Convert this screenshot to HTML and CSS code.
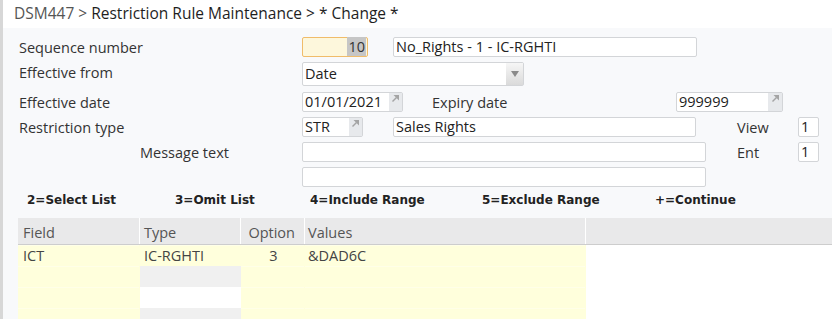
FILE: index.html
```html
<html>
	<head>
		<title>DSM447 - Restriction Rule Maintenance</title>
		<link rel="stylesheet" href="styles.css">
	</head>
	<body>
		<div class="Screen">
			<div class="Title"><span class="Pgm">DSM447 &gt;</span> Restriction Rule Maintenance &gt; * Change *</div>

			<div class="Form">
				<div class="Row">
					<div class="Lbl">Sequence number</div>
					<div class="Fld Seq"><span class="Hl">10</span></div>
					<div class="Fld Desc">No_Rights - 1 - IC-RGHTI</div>
				</div>
				<div class="Row Tall">
					<div class="Lbl Up">Effective from</div>
					<div class="Fld Drop">Date<span class="DropBtn"><svg width="8" height="6" viewBox="0 0 8 6"><polygon points="0,0 8,0 4,6" fill="#8a8a8a"/></svg></span></div>
				</div>
				<div class="Row">
					<div class="Lbl">Effective date</div>
					<div class="Fld Date">01/01/2021<span class="Prompt"><svg width="7" height="7" viewBox="0 0 7 7"><polygon points="1.5,0 7,0 7,5.5" fill="#a4a4a4"/><line x1="0.5" y1="6.5" x2="4.5" y2="2.5" stroke="#a4a4a4" stroke-width="1.4"/></svg></span></div>
					<div class="Lbl2 Exp">Expiry date</div>
					<div class="Fld Expiry">999999<span class="Prompt"><svg width="7" height="7" viewBox="0 0 7 7"><polygon points="1.5,0 7,0 7,5.5" fill="#a4a4a4"/><line x1="0.5" y1="6.5" x2="4.5" y2="2.5" stroke="#a4a4a4" stroke-width="1.4"/></svg></span></div>
				</div>
				<div class="Row">
					<div class="Lbl">Restriction type</div>
					<div class="Fld Type">STR<span class="Prompt"><svg width="7" height="7" viewBox="0 0 7 7"><polygon points="1.5,0 7,0 7,5.5" fill="#a4a4a4"/><line x1="0.5" y1="6.5" x2="4.5" y2="2.5" stroke="#a4a4a4" stroke-width="1.4"/></svg></span></div>
					<div class="Fld TypeDesc">Sales Rights</div>
					<div class="Lbl2 Side">View</div>
					<div class="Fld Tiny">1</div>
				</div>
				<div class="Row">
					<div class="Lbl Indent">Message text</div>
					<div class="Fld Msg"></div>
					<div class="Lbl2 Side2">Ent</div>
					<div class="Fld Tiny">1</div>
				</div>
				<div class="Row">
					<div class="Lbl"></div>
					<div class="Fld Msg"></div>
				</div>
			</div>

			<div class="Keys">
				<span class="K1">2=Select List</span>
				<span class="K2">3=Omit List</span>
				<span class="K3">4=Include Range</span>
				<span class="K4">5=Exclude Range</span>
				<span>+=Continue</span>
			</div>

			<div class="Grid">
				<div class="Head">
					<div class="C1">Field</div>
					<div class="C2">Type</div>
					<div class="C3">Option</div>
					<div class="C4">Values</div>
					<div class="C5"></div>
				</div>
				<div class="Line">
					<div class="C1">ICT</div>
					<div class="C2">IC-RGHTI</div>
					<div class="C3 Num">3</div>
					<div class="C4">&amp;DAD6C</div>
				</div>
				<div class="Line">
					<div class="C1"></div>
					<div class="C2 Grey"></div>
					<div class="C3"></div>
					<div class="C4"></div>
				</div>
				<div class="Line">
					<div class="C1"></div>
					<div class="C2 White"></div>
					<div class="C3"></div>
					<div class="C4"></div>
				</div>
				<div class="Line">
					<div class="C1"></div>
					<div class="C2 Grey"></div>
					<div class="C3"></div>
					<div class="C4"></div>
				</div>
			</div>
		</div>
	</body>
</html>
```

FILE: styles.css
```css
html, body {margin: 0; height: 100%; overflow: hidden; background-color: #f8f9fb;}

.Screen {
	border-left: 3px solid #d7d7d7;
	height: 100%;
	font-family: "Open Sans", sans-serif;
	font-size: 14.5px;
	color: #333;
}

.Title {
	height: 28px;
	line-height: 27px;
	padding-left: 11px;
	background-color: white;
	font-size: 15.5px;
	color: #1e1e1e;
}
.Pgm {
	color: #555;
}

.Form {
	padding: 9px 0 0 16px;
}

.Row {
	display: flex;
	align-items: center;
	height: 20px;
	margin-bottom: 5px;
}
.Row.Tall {
	height: 24px;
	margin-bottom: 6px;
}

.Lbl {
	width: 283px;
	flex-shrink: 0;
	white-space: nowrap;
}
.Lbl.Up {
	margin-top: -3px;
}
.Lbl.Indent {
	width: 162px;
	padding-left: 121px;
}
.Lbl2 {
	white-space: nowrap;
}

.Fld {
	box-sizing: border-box;
	height: 20px;
	line-height: 18px;
	border: 1px solid #d3d5d8;
	border-radius: 2px;
	background-color: white;
	padding-left: 2px;
	color: #222;
	position: relative;
	white-space: nowrap;
}

.Seq {
	width: 66px;
	background-color: #fdf7dc;
	border-color: #f0bc6a;
	text-align: right;
	padding-right: 1px;
}
.Hl {
	background-color: #c6c6c6;
	padding: 0 1px;
	color: #333;
}
.Desc {
	width: 304px;
	margin-left: 25px;
}

.Drop {
	width: 222px;
	height: 24px;
	line-height: 22px;
}
.DropBtn {
	position: absolute;
	right: 0;
	top: 0;
	width: 17px;
	height: 22px;
	background: linear-gradient(#f6f6f6, #dadada);
	display: flex;
	align-items: center;
	justify-content: center;
}

.Prompt {
	position: absolute;
	right: 0;
	top: 0;
	width: 13px;
	height: 18px;
	background-color: #e7e9ec;
	display: flex;
	justify-content: center;
	padding-top: 2px;
	box-sizing: border-box;
}

.Date {
	width: 101px;
}
.Exp {
	margin-left: 29px;
	width: 244px;
}
.Expiry {
	width: 107px;
}
.Expiry .Prompt {
	width: 14px;
}

.Type {
	width: 61px;
}
.TypeDesc {
	width: 303px;
	margin-left: 30px;
}
.Side {
	margin-left: 41px;
	width: 61px;
}
.Side2 {
	margin-left: 31px;
	width: 61px;
}
.Tiny {
	width: 21px;
}
.Msg {
	width: 404px;
}

.Keys {
	display: flex;
	align-items: center;
	height: 20px;
	margin-top: -2px;
	padding-left: 24px;
	font-family: "DejaVu Sans", sans-serif;
	font-weight: bold;
	font-size: 12px;
	color: #222;
}
.K1 { width: 148px; }
.K2 { width: 135px; }
.K3 { width: 172px; }
.K4 { width: 173px; }

.Grid {
	margin: 8px 0 0 15px;
	background-color: white;
}

.Head {
	display: flex;
	height: 26px;
	line-height: 29px;
	background-color: #e9e9ea;
	border-bottom: 1px solid #cdcdcd;
	color: #555;
}
.Head > div {
	border-right: 1px solid white;
}
.Line {
	display: flex;
	height: 21px;
	line-height: 22px;
	color: #444;
}
.Line > div {
	background-color: #ffffdc;
	border-right: 1px solid #ffffdc;
	box-shadow: inset 0 1px 0 #ffffe8;
}

.Head > div, .Line > div {
	box-sizing: border-box;
	flex-shrink: 0;
}
.C1 { width: 122px; padding-left: 5px; }
.C2 { width: 101px; padding-left: 4px; }
.C3 { width: 64px; text-align: center; }
.C4 { width: 281px; padding-left: 3px; }
.Head .C5 { flex: 1; border-right: none; }
.Head .C3 { text-align: right; padding-right: 9px; }
.Num { padding-left: 2px; }

.Line .Grey {
	background-color: #f0f0f0;
	border-right-color: #f0f0f0;
	box-shadow: none;
}
.Line .White {
	background-color: white;
	border-right-color: white;
	box-shadow: none;
}
```
